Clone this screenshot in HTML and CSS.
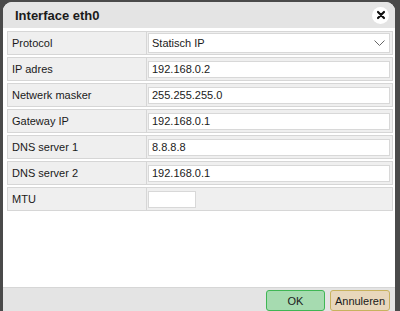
FILE: index.html
```html
<!DOCTYPE html>
<html>
<head>
<meta charset="utf-8">
<link rel="stylesheet" href="styles.css">
</head>
<body>
<div class="dialog">
  <div class="titlebar">
    <span class="title">Interface eth0</span>
    <span class="close"><svg width="10" height="10" viewBox="0 0 10 10"><path d="M2 2 L8 8 M8 2 L2 8" stroke="#111" stroke-width="2.2" stroke-linecap="round"/></svg></span>
  </div>
  <div class="content">
    <div class="row">
      <div class="label">Protocol</div>
      <div class="value"><div class="select"><span>Statisch IP</span><svg width="11" height="7" viewBox="0 0 11 7"><path d="M0.5 0.5 L5.5 5.5 L10.5 0.5" fill="none" stroke="#666" stroke-width="1"/></svg></div></div>
    </div>
    <div class="row">
      <div class="label">IP adres</div>
      <div class="value"><div class="input">192.168.0.2</div></div>
    </div>
    <div class="row">
      <div class="label">Netwerk masker</div>
      <div class="value"><div class="input">255.255.255.0</div></div>
    </div>
    <div class="row">
      <div class="label">Gateway IP</div>
      <div class="value"><div class="input">192.168.0.1</div></div>
    </div>
    <div class="row">
      <div class="label">DNS server 1</div>
      <div class="value"><div class="input">8.8.8.8</div></div>
    </div>
    <div class="row">
      <div class="label">DNS server 2</div>
      <div class="value"><div class="input">192.168.0.1</div></div>
    </div>
    <div class="row">
      <div class="label">MTU</div>
      <div class="value"><div class="input small"></div></div>
    </div>
  </div>
  <div class="footer">
    <button class="btn ok">OK</button>
    <button class="btn cancel">Annuleren</button>
  </div>
</div>
</body>
</html>
```

FILE: styles.css
```css
html, body {
  margin: 0;
  padding: 0;
  height: 100%;
  overflow: hidden;
}
body {
  background: #4a4a4a;
  font-family: "Liberation Sans", Arial, sans-serif;
  font-size: 11px;
  color: #1a1a1a;
}
.dialog {
  margin: 2px 5px 0 3px;
  height: 318px;
  background: #fff;
  border-radius: 9px;
  display: flex;
  flex-direction: column;
  overflow: hidden;
}
.titlebar {
  height: 26px;
  flex: none;
  background: #e4e4e4;
  display: flex;
  align-items: center;
  justify-content: space-between;
  padding: 0 6px 0 12px;
}
.title {
  font-weight: bold;
  font-size: 13px;
  color: #1a1a1a;
}
.close {
  width: 17px;
  height: 17px;
  border-radius: 50%;
  background: #fff;
  display: flex;
  align-items: center;
  justify-content: center;
}
.content {
  flex: 1;
  padding: 3px 2px 0 4px;
  display: flex;
  flex-direction: column;
  gap: 2px;
}
.row {
  display: flex;
  border: 1px solid #d6d6d6;
  background: #efefef;
  box-sizing: border-box;
  height: 24px;
}
.label {
  width: 139px;
  box-sizing: border-box;
  flex: none;
  display: flex;
  align-items: center;
  padding-left: 4px;
  border-right: 1px solid #d6d6d6;
}
.value {
  flex: 1;
  display: flex;
  align-items: center;
  padding: 0 2px 0 1px;
}
.input {
  flex: 1;
  height: 17px;
  box-sizing: border-box;
  background: #fff;
  border: 1px solid #d8d8d8;
  padding-left: 3px;
  display: flex;
  align-items: center;
}
.input.small {
  flex: none;
  width: 48px;
}
.select {
  flex: 1;
  height: 20px;
  box-sizing: border-box;
  background: #fff;
  border: 1px solid #d8d8d8;
  padding: 0 4px 0 3px;
  display: flex;
  align-items: center;
  justify-content: space-between;
}
.footer {
  flex: none;
  height: 30px;
  background: #e4e4e4;
  border-top: 1px solid #d6d6d6;
  display: flex;
  justify-content: flex-end;
  align-items: flex-start;
  gap: 5px;
  padding: 2px 5px 0 0;
}
.btn {
  font-family: "Liberation Sans", Arial, sans-serif;
  font-size: 11px;
  color: #1a1a1a;
  height: 21px;
  border-radius: 3px;
  padding: 0;
  margin: 0;
}
.ok {
  width: 59px;
  background: #a6dbb0;
  border: 1px solid #3fb654;
}
.cancel {
  width: 60px;
  background: #e8d7bc;
  border: 1px solid #c8b25e;
}
```
